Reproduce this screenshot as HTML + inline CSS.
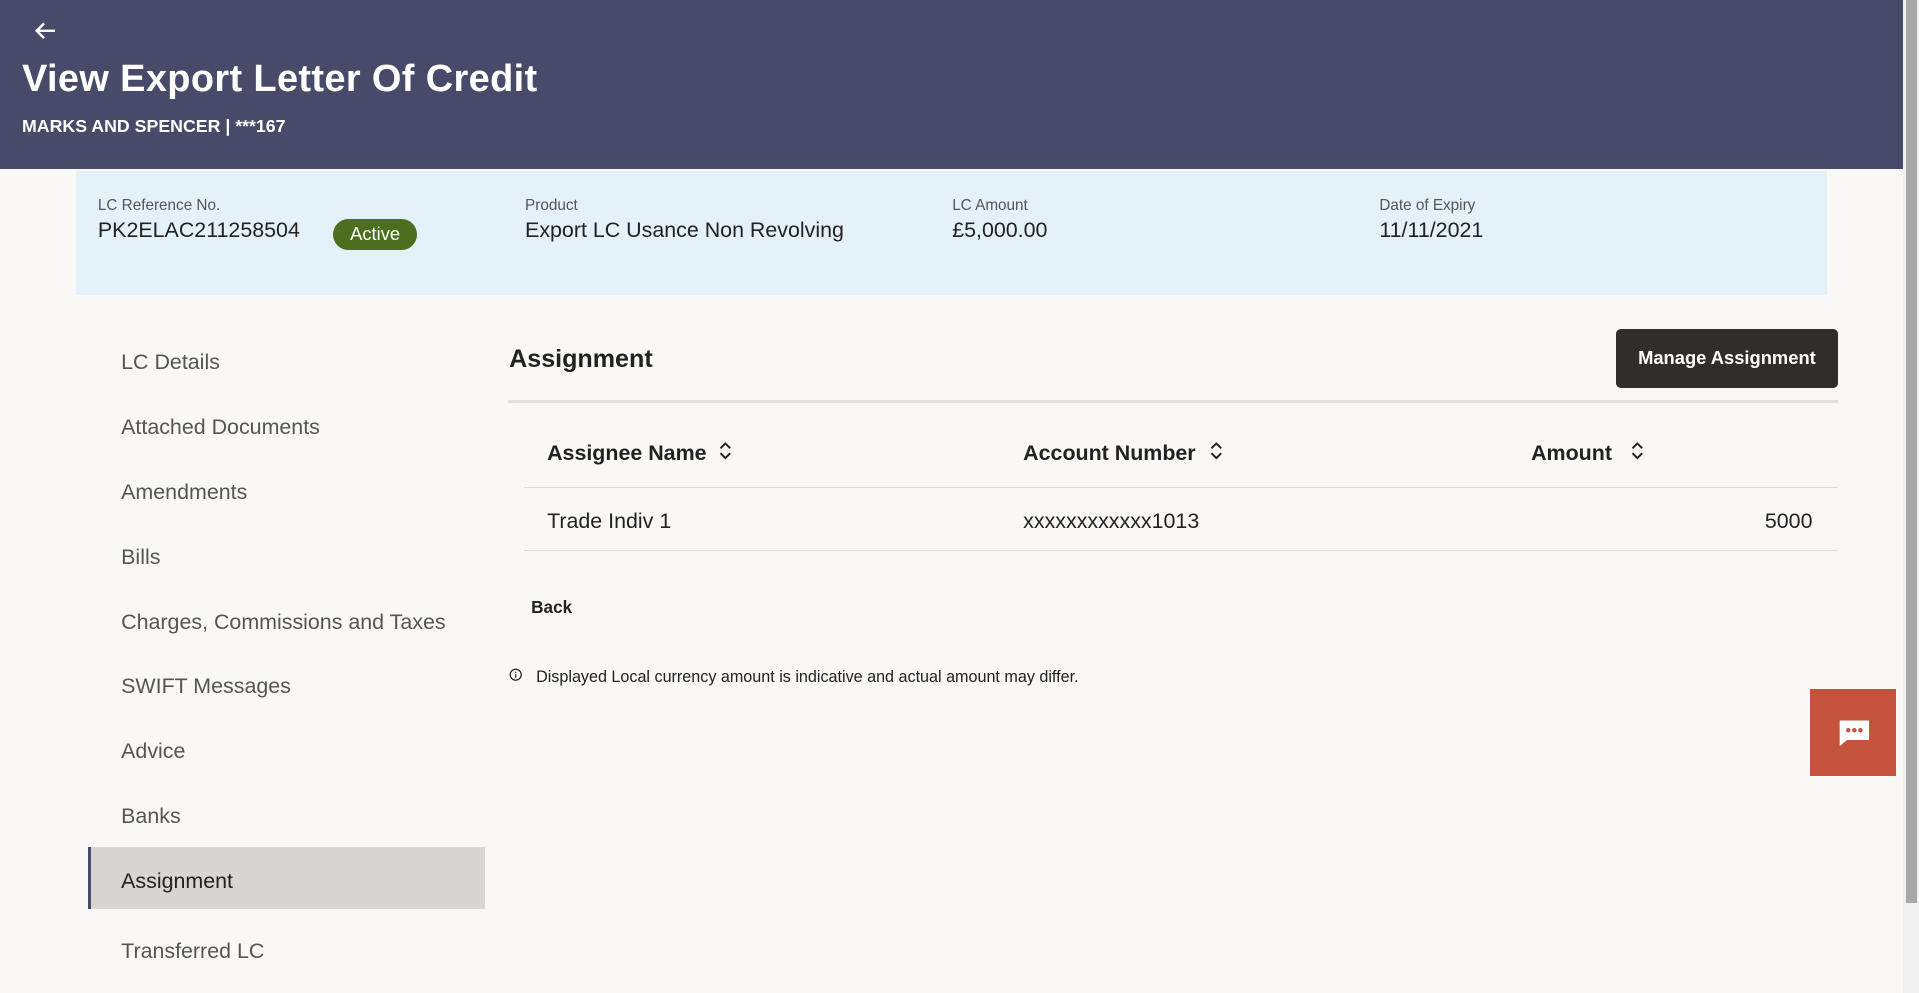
<!DOCTYPE html>
<html><head><meta charset="utf-8">
<style>
html,body{margin:0;padding:0;overflow:hidden}
body{width:1919px;height:993px;background:#f9f8f6;font-family:"Liberation Sans",sans-serif;}
#w{zoom:1.2239;width:1568px;height:811px;position:relative;overflow:hidden;background:#f9f8f6}
.a{position:absolute;white-space:nowrap}
.hdr{position:absolute;left:0;top:0;width:1555px;height:138px;background:#474a68}
.lbl{font-size:12.5px;color:#555}
.val{font-size:17.5px;color:#222}
.nav{font-size:17.5px;color:#555;left:99px}
.th{font-size:17.5px;font-weight:600;color:#222}
.line{position:absolute;height:1px;background:#ddd}
</style></head><body><div id="w">
<div class="hdr"></div>
<svg class="a" style="left:27px;top:17px" width="20" height="16" viewBox="0 0 20 16"><path d="M18 8H3M9 2L3 8l6 6" stroke="#fff" stroke-width="2" fill="none"/></svg>
<div class="a" style="left:18px;top:47px;font-size:31px;font-weight:bold;color:#fff;letter-spacing:0.3px">View Export Letter Of Credit</div>
<div class="a" style="left:18px;top:95px;font-size:14.5px;font-weight:bold;color:#fff">MARKS AND SPENCER | ***167</div>
<div class="a" style="left:62px;top:140px;width:1431px;height:101px;background:#e4f1f8"></div>
<div class="a lbl" style="left:80px;top:161px">LC Reference No.</div>
<div class="a val" style="left:80px;top:178px">PK2ELAC211258504</div>
<div class="a" style="left:272px;top:179px;width:69px;height:25px;border-radius:13px;background:#4b6f1e;color:#fff;font-size:15px;text-align:center;line-height:25px">Active</div>
<div class="a lbl" style="left:429px;top:161px">Product</div>
<div class="a val" style="left:429px;top:178px">Export LC Usance Non Revolving</div>
<div class="a lbl" style="left:778px;top:161px">LC Amount</div>
<div class="a val" style="left:778px;top:178px">£5,000.00</div>
<div class="a lbl" style="left:1127px;top:161px">Date of Expiry</div>
<div class="a val" style="left:1127px;top:178px">11/11/2021</div>

<div class="a" style="left:72px;top:692px;width:324px;height:51px;background:#d9d5d3;border-left:3px solid #474a68;box-sizing:border-box"></div>
<div class="a nav" style="top:286px">LC Details</div>
<div class="a nav" style="top:339px">Attached Documents</div>
<div class="a nav" style="top:392px">Amendments</div>
<div class="a nav" style="top:445px">Bills</div>
<div class="a nav" style="top:498px">Charges, Commissions and Taxes</div>
<div class="a nav" style="top:551px">SWIFT Messages</div>
<div class="a nav" style="top:604px">Advice</div>
<div class="a nav" style="top:657px">Banks</div>
<div class="a nav" style="top:710px;color:#222">Assignment</div>
<div class="a nav" style="top:767px">Transferred LC</div>

<div class="a" style="left:416px;top:282px;font-size:20.5px;font-weight:bold;color:#222">Assignment</div>
<div class="a" style="left:1320px;top:269px;width:182px;height:48px;background:#312d2a;border-radius:4px;color:#fff;font-size:15px;font-weight:bold;text-align:center;line-height:48px">Manage Assignment</div>
<div class="line" style="left:415px;top:327px;width:1087px;height:2px;background:#e2e0de"></div>
<div class="a th" style="left:447px;top:360px">Assignee Name</div>
<div class="a th" style="left:836px;top:360px">Account Number</div>
<div class="a th" style="left:1251px;top:360px">Amount</div>
<svg class="a" style="left:587px;top:360px" width="12" height="16" viewBox="0 0 12 16"><path d="M2 6l4-4 4 4M2 10l4 4 4-4" stroke="#222" stroke-width="1.6" fill="none"/></svg>
<svg class="a" style="left:988px;top:360px" width="12" height="16" viewBox="0 0 12 16"><path d="M2 6l4-4 4 4M2 10l4 4 4-4" stroke="#222" stroke-width="1.6" fill="none"/></svg>
<svg class="a" style="left:1332px;top:360px" width="12" height="16" viewBox="0 0 12 16"><path d="M2 6l4-4 4 4M2 10l4 4 4-4" stroke="#222" stroke-width="1.6" fill="none"/></svg>
<div class="line" style="left:428px;top:398px;width:1074px"></div>
<div class="a" style="left:447px;top:416px;font-size:17.5px;color:#222">Trade Indiv 1</div>
<div class="a" style="left:836px;top:416px;font-size:17.5px;color:#222">xxxxxxxxxxxx1013</div>
<div class="a" style="left:1442px;top:416px;font-size:17.5px;color:#222">5000</div>
<div class="line" style="left:428px;top:449px;width:1074px"></div>
<div class="a" style="left:434px;top:488px;font-size:14px;font-weight:bold;color:#222">Back</div>
<svg class="a" style="left:416px;top:546px" width="11" height="11" viewBox="0 0 11 11"><circle cx="5.5" cy="5.5" r="4.5" stroke="#222" fill="none"/><path d="M5.5 5v3M5.5 3v1" stroke="#222"/></svg>
<div class="a" style="left:438px;top:546px;font-size:13.2px;color:#222">Displayed Local currency amount is indicative and actual amount may differ.</div>
<div class="a" style="left:1479px;top:563px;width:70px;height:71px;background:#c4533e"></div>
<svg class="a" style="left:1500px;top:587px" width="30" height="26" viewBox="0 0 30 26"><path d="M3 2h24v16H9l-6 5z" fill="#fff"/><circle cx="10" cy="10" r="1.8" fill="#c4533e"/><circle cx="15" cy="10" r="1.8" fill="#c4533e"/><circle cx="20" cy="10" r="1.8" fill="#c4533e"/></svg>
<div class="a" style="left:1555px;top:0;width:13px;height:811px;background:#f1f1f1"></div>
<div class="a" style="left:1557px;top:0;width:9px;height:738px;background:#a8a8a8"></div>
</div></body></html>
